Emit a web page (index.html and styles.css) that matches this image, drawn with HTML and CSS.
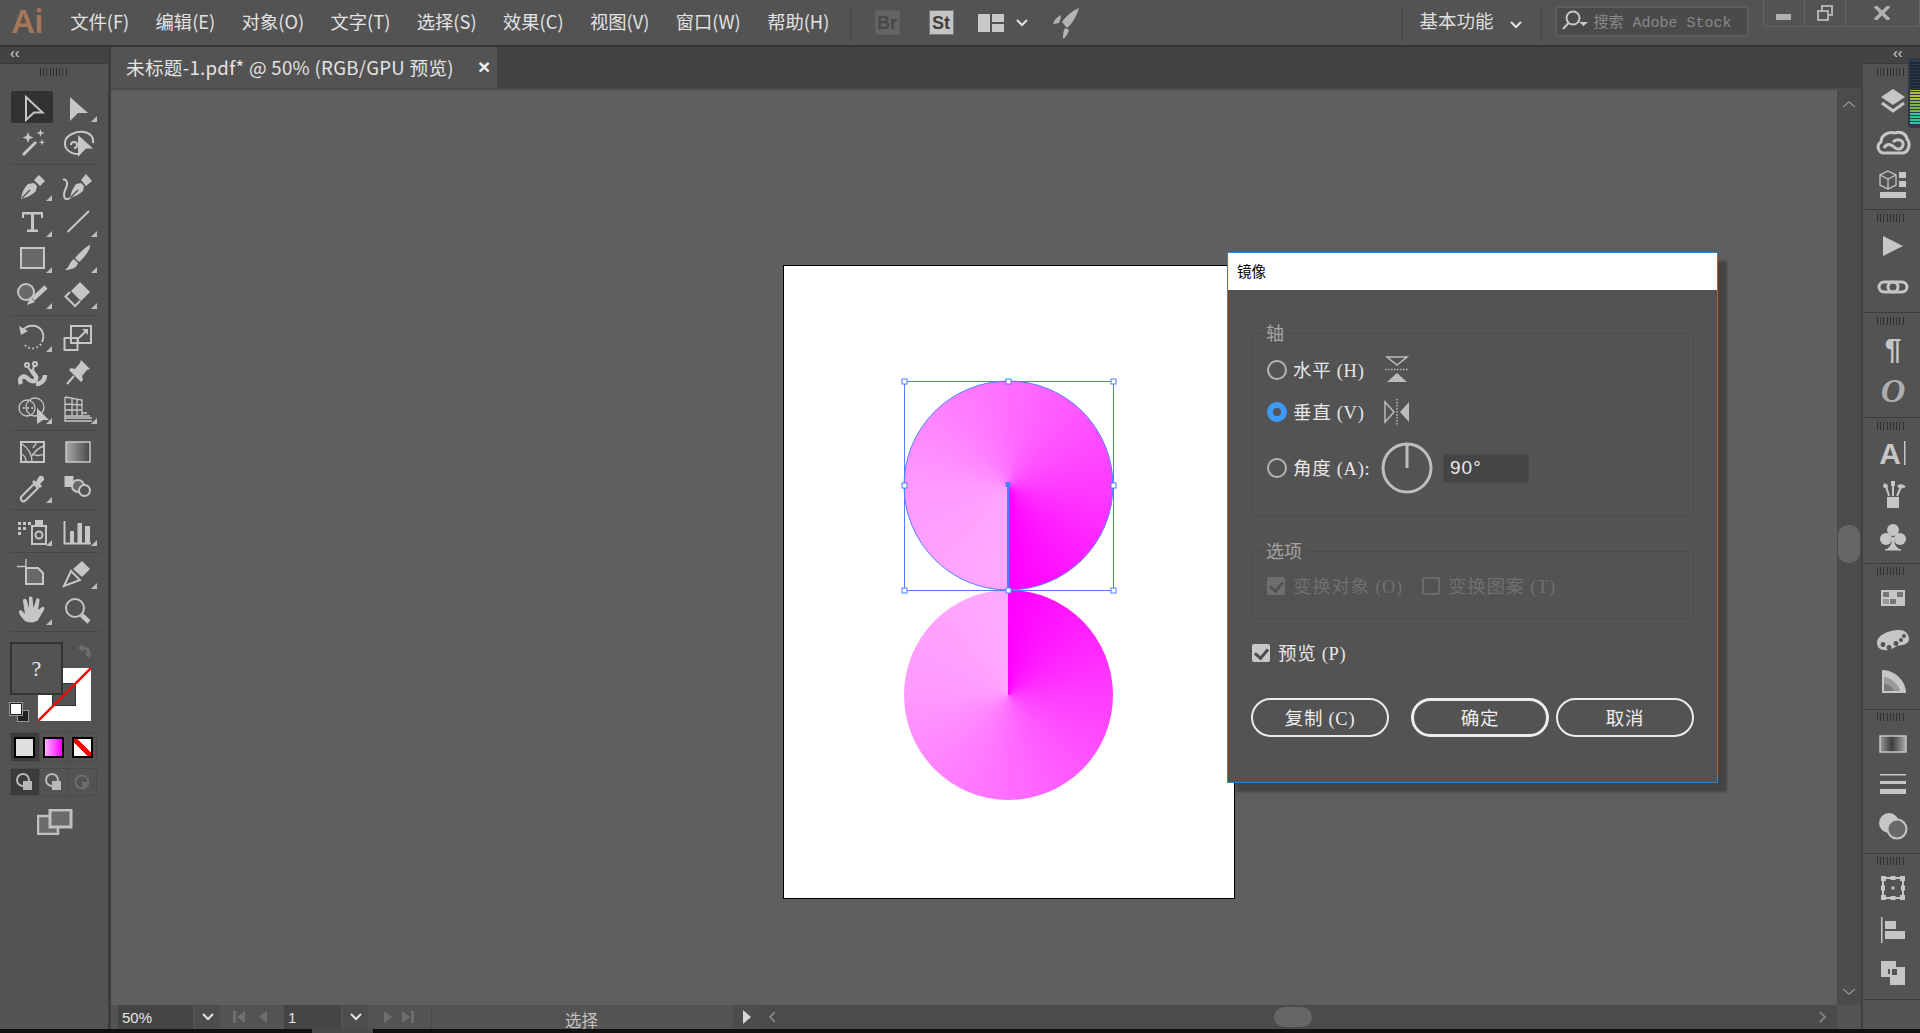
FILE: index.html
```html
<!DOCTYPE html>
<html lang="zh-CN">
<head>
    <meta charset="UTF-8">
    <title>未标题-1.pdf* @ 50% (RGB/GPU 预览)</title>
    <link rel="stylesheet" href="styles.css">
</head>
<body>

<!-- Menu bar -->
<header class="menubar">
    <span class="logo">Ai</span>
    <nav class="menu">
        <span>文件(F)</span><span>编辑(E)</span><span>对象(O)</span><span>文字(T)</span><span>选择(S)</span><span>效果(C)</span><span>视图(V)</span><span>窗口(W)</span><span>帮助(H)</span>
    </nav>
    <i class="bar-sep first-sep"></i>
    <span class="badge badge-br">Br</span>
    <span class="badge badge-st">St</span>
    <svg class="layout-icon" width="26" height="18" viewBox="0 0 26 18"><rect width="12" height="18"/><rect x="14" width="12" height="8"/><rect x="14" y="10" width="12" height="8"/></svg>
    <svg class="chev layout-chev" width="12" height="8" viewBox="0 0 12 8"><path d="M1 1l5 5 5-5"/></svg>
    <svg class="rocket" width="28" height="32" viewBox="0 0 28 32"><path d="M27 1C25 8 21 16 15 21L10 15C14 9 20 4 27 1Z"/><path d="M9 8C5 10 2 13 1 17L7 16C8 13 9 10 9 8Z"/><path d="M17 23C16 27 14 30 11 32C11 28 11 24 13 21Z"/></svg>
    <i class="bar-sep workspace-sep"></i>
    <span class="workspace-name">基本功能</span>
    <svg class="chev workspace-chev" width="12" height="8" viewBox="0 0 12 8"><path d="M1 1l5 5 5-5"/></svg>
    <i class="bar-sep search-sep"></i>
    <div class="stock-search">
        <svg width="26" height="26" viewBox="0 0 26 26"><circle cx="11" cy="10" r="6.500"/><path d="M6.500 15L1 21"/><path class="tip" d="M17 14h9l-4.500 4z"/></svg>
        <span>搜索 Adobe Stock</span>
    </div>
    <div class="win-controls">
        <span class="win-btn"><i class="win-min"></i></span>
        <span class="win-btn"><svg width="18" height="18" viewBox="0 0 18 18"><path d="M5 1h12v11h-4v5H1V6h4zM7 3v3h6v4h2V3zM3 8v7h8V8z" fill-rule="evenodd"/></svg></span>
        <span class="win-btn win-close"><svg width="16" height="14" viewBox="0 0 16 14"><path d="M1 0l7 7 7-7M1 14l7-7 7 7"/></svg></span>
    </div>
</header>

<div class="workspace">

    <!-- Tools panel -->
    <aside class="tools">
        <div class="collapse-bar">‹‹</div>
        <div class="grip"></div>

        <div class="tool-grid">
            <span class="tool active"><svg class="ico" viewBox="0 0 36 36"><path class="line" d="M12 8L28.500 23.500H20L12 31Z"/></svg></span>
            <span class="tool more"><svg class="ico" viewBox="0 0 36 36"><path d="M10 8L28 24H18L10 32Z"/></svg></span>
            <span class="tool"><svg class="ico" viewBox="0 0 36 36"><path class="line thick" d="M9 30L22 17"/><path d="M14 7l1.500 4 4 1.500-4 1.500-1.500 4-1.500-4-4-1.500 4-1.500zM26.500 4l1 3 3 1-3 1-1 3-1-3-3-1 3-1zM28 14l.8 2.500 2.500.8-2.500.8-.8 2.500-.8-2.500-2.500-.8 2.500-.8z"/></svg></span>
            <span class="tool"><svg class="ico" viewBox="0 0 36 36"><path class="line" d="M18 29C10 29 4 24 5 17C6 10 16 6 24 7C31 8 34 13 33 18"/><path class="line" d="M11 20a3 3 0 1 1 3 3"/><path d="M18 10L33 23.500H26L18 32Z"/></svg></span>
        </div>
        <div class="tool-sep"></div>
        <div class="tool-grid">
            <span class="tool more"><svg class="ico" viewBox="0 0 36 36"><path d="M7 31C8 24 10 20 14 16L20 15L23 18L22 23C18 27 14 29 7 31Z"/><path class="cut" d="M8 30L16 22"/><path d="M20 12L25 7L31 13L26 18Z"/></svg></span>
            <span class="tool"><svg class="ico" viewBox="0 0 36 36"><path d="M10 30C11 24 13 20 16 16L21 15L24 18L23 23C20 26 16 28 10 30Z"/><path class="cut" d="M11 29L18 22"/><path d="M21 12L26 6L32 13L26 18Z"/><path class="line" d="M10 30C3 34 3 26 6 20C9 14 5 10 3 12"/></svg></span>
            <span class="tool more"><svg class="ico" viewBox="0 0 36 36"><path d="M8 8H29V14H27V10.500H20V25.500H24V28H13V25.500H17V10.500H10V14H8Z"/></svg></span>
            <span class="tool more"><svg class="ico" viewBox="0 0 36 36"><path class="line" d="M7.500 28L29 7"/></svg></span>
            <span class="tool more"><svg class="ico" viewBox="0 0 36 36"><rect class="line filled" x="7" y="8" width="23" height="20"/></svg></span>
            <span class="tool more"><svg class="ico" viewBox="0 0 36 36"><path d="M30 5C31 9 24 18 19 22L15 18C20 12 27 6 30 5Z"/><path d="M14 19L18 23C17 28 11 30 5 30C9 28 10 21 14 19Z"/></svg></span>
            <span class="tool more"><svg class="ico" viewBox="0 0 36 36"><circle class="line filled" cx="12" cy="16" r="8"/><path class="line wide" d="M32 11L19 23"/><path d="M16 21L21 26L13 29Z"/></svg></span>
            <span class="tool more"><svg class="ico" viewBox="0 0 36 36"><path d="M20 6L30 16L21 25L11 15Z"/><path class="line" d="M10 16L5.500 20.500L15 30L20 25"/></svg></span>
        </div>
        <div class="tool-sep"></div>
        <div class="tool-grid">
            <span class="tool more"><svg class="ico" viewBox="0 0 36 36"><path class="line" d="M8 12C13 5 24 5 28 12C30 16 30 19 28 23"/><path class="line dots" d="M27 25C22 31 14 31 9 24"/><path d="M5 7L7 16L14 12Z"/></svg></span>
            <span class="tool"><svg class="ico" viewBox="0 0 36 36"><rect class="line" x="4.500" y="19" width="13" height="12"/><rect class="line" x="11" y="7" width="20" height="17"/><rect class="line" x="11" y="19" width="7" height="5"/><path class="line" d="M19 19L27 11"/><path d="M22 10H28V16Z"/></svg></span>
            <span class="tool"><svg class="ico" viewBox="0 0 36 36"><path class="line wide" d="M7 29C4 22 10 20 13 23C16 26 20 28 22 24C24 20 17 19 19 15"/><path class="line wide" d="M22 29C26 29 31 26 31 20"/><circle class="line" cx="13" cy="10" r="2"/><circle class="line" cx="21" cy="9" r="2"/><path class="line" d="M14 12L18 18M20 11L18 18"/></svg></span>
            <span class="tool"><svg class="ico" viewBox="0 0 36 36"><path d="M21 5L30 14L27 15L22 21L23 25L21 27L9 15L11 13L15 14L20 8Z"/><path class="line" d="M14 21L7 29"/></svg></span>
            <span class="tool more"><svg class="ico" viewBox="0 0 36 36"><circle class="line thin" cx="13" cy="17" r="8"/><circle class="line thin" cx="21" cy="16" r="9"/><path class="line dots" d="M9 17H19"/><path d="M23 17L35 29H29L23 33Z"/></svg></span>
            <span class="tool more"><svg class="ico" viewBox="0 0 36 36"><path class="line thin" d="M5 6V30H32M5 6L22 9V25H5M12 7V25M17 8V25M5 13L22 14M5 19L22 19"/><path class="line thin" d="M22 22H27M22 25H30M5 27H32"/></svg></span>
        </div>
        <div class="tool-sep"></div>
        <div class="tool-grid">
            <span class="tool"><svg class="ico" viewBox="0 0 36 36"><rect class="line" x="7" y="8" width="23" height="20"/><path class="line thin" d="M18 28C18 20 14 14 8 10M18 22C22 16 26 13 30 12M12 28C12 24 10 21 7 20M18 20C22 22 26 22 30 20M19 14C20 12 22 10 23 8"/></svg></span>
            <span class="tool"><svg class="ico" viewBox="0 0 36 36"><defs><linearGradient id="gradIcon"><stop offset="0" stop-color="#a8a8a8"/><stop offset="1" stop-color="#484848"/></linearGradient></defs><rect class="grad-box" x="6" y="8" width="24" height="20"/></svg></span>
            <span class="tool more"><svg class="ico" viewBox="0 0 36 36"><path class="line" d="M8 31C6 29 7 27 8 26L20 14L24 18L12 30C11 31 9 32 8 31Z"/><path d="M18 12L20 10L22 12L24 8C26 4 31 6 30 10L26 14L28 16L26 18Z"/></svg></span>
            <span class="tool"><svg class="ico" viewBox="0 0 36 36"><rect x="4.500" y="6" width="9" height="11"/><circle class="line filled" cx="18" cy="16" r="6"/><circle class="line hollow" cx="24.500" cy="20.500" r="5.500"/></svg></span>
        </div>
        <div class="tool-sep"></div>
        <div class="tool-grid">
            <span class="tool more"><svg class="ico" viewBox="0 0 36 36"><path d="M4 9h3v3H4zM9 9h3v3H9zM14 9h3v3h-3zM4 14h3v3H4zM9 14h3v3H9zM4 19h3v3H4zM21 7h8v5h-8z"/><rect class="line" x="18" y="13" width="14" height="18"/><circle class="line" cx="25" cy="22" r="3.500"/></svg></span>
            <span class="tool more"><svg class="ico" viewBox="0 0 36 36"><path class="line" d="M4.500 8V30.500H31"/><path d="M10 18h4v12h-4zM17.500 10h4.500v20h-4.500zM25 13h5v17h-5z"/></svg></span>
        </div>
        <div class="tool-sep"></div>
        <div class="tool-grid">
            <span class="tool"><svg class="ico" viewBox="0 0 36 36"><path class="line thin" d="M12 3V12M3 10.500H12"/><path class="line filled" d="M12 12H24L29 17V28H12Z"/></svg></span>
            <span class="tool more"><svg class="ico" viewBox="0 0 36 36"><path class="line" d="M4 30L11 15L20 24Z"/><path d="M13 13L22 5L30 13L22 21Z"/></svg></span>
            <span class="tool more"><svg class="ico" viewBox="0 0 36 36"><path d="M11 29C8 26 4 21 5 19C7 17 9 20 11 22L9 9C9 6 12 6 13 9L15 16L15 6C15 4 18 4 18.500 6L19.500 16L22 8C23 5 26 6 25.500 9L24 18L28 15C30 14 31 16 30 18L24 28C22 31 14 31 11 29Z"/></svg></span>
            <span class="tool"><svg class="ico" viewBox="0 0 36 36"><circle class="line" cx="15" cy="16" r="9"/><path class="line wide" d="M21.500 23L29 30"/></svg></span>
        </div>
        <div class="tool-sep"></div>

        <div class="swatch-stack">
            <div class="stroke-box"><i class="stroke-hole"></i><svg viewBox="0 0 53 53" width="53" height="53"><path d="M0 53L53 0"/></svg></div>
            <div class="fill-box">?</div>
            <svg class="swap" width="16" height="16" viewBox="0 0 16 16"><path d="M1 5L6 1V3.500C11 3.500 13 6 13 10H15L11.500 15L8 10H10C10 7.500 9 6.500 6 6.500V9Z"/></svg>
            <div class="default-colors"><i class="dc-back"></i><i class="dc-front"></i></div>
        </div>

        <div class="mode-row color-modes">
            <span class="mode active"><i class="mc mc-solid"></i></span>
            <span class="mode"><i class="mc mc-grad"></i></span>
            <span class="mode"><i class="mc mc-none"></i></span>
        </div>
        <div class="mode-row draw-modes">
            <span class="mode active"><svg width="20" height="20" viewBox="0 0 20 20"><circle class="ring" cx="8" cy="8" r="6"/><rect x="8" y="9" width="9" height="9"/></svg></span>
            <span class="mode"><svg width="20" height="20" viewBox="0 0 20 20"><rect x="8" y="9" width="9" height="9"/><circle class="ring" cx="8" cy="8" r="6"/></svg></span>
            <span class="mode dim"><svg width="20" height="20" viewBox="0 0 20 20"><circle class="ring" cx="10" cy="10" r="6.500"/><path d="M10 10h6a6 6 0 0 1-6 6z"/></svg></span>
        </div>

        <svg class="screen-mode" width="36" height="26" viewBox="0 0 36 26">
            <rect class="sm-back" x="1" y="7" width="20" height="18"/>
            <rect class="sm-front" x="13" y="1" width="21" height="17"/>
        </svg>
    </aside>

    <!-- Document -->
    <main class="doc">
        <div class="tabstrip">
            <div class="tab"><span>未标题-1.pdf* @ 50% (RGB/GPU 预览)</span><b>×</b></div>
        </div>
        <div class="doc-main">
            <div class="canvas-col">
                <div class="canvas">
                    <div class="artboard">
                        <div class="pie pie-top"></div>
                        <div class="pie pie-bottom"></div>
                        <svg class="selection" width="450" height="632" viewBox="784 266 450 632">
                            <circle cx="1008.500" cy="485.500" r="104.500"/>
                            <rect x="904.500" y="381.500" width="209" height="209"/>
                            <path class="spoke" d="M1008 486V590"/>
                            <rect class="center-pt" x="1005.500" y="482" width="5" height="5"/>
                            <rect class="h" x="902" y="379" width="5" height="5"/><rect class="h" x="1006" y="379" width="5" height="5"/><rect class="h" x="1111" y="379" width="5" height="5"/>
                            <rect class="h" x="902" y="483" width="5" height="5"/><rect class="h" x="1111" y="483" width="5" height="5"/>
                            <rect class="h" x="902" y="588" width="5" height="5"/><rect class="h" x="1006" y="588" width="5" height="5"/><rect class="h" x="1111" y="588" width="5" height="5"/>
                        </svg>
                    </div>
                </div>
                <div class="statusbar">
                    <span class="field zoom-field">50%</span>
                    <span class="st-cell chev-cell"><svg class="chev" width="12" height="8" viewBox="0 0 12 8"><path d="M1 1l5 5 5-5"/></svg></span>
                    <span class="st-cell nav-cell nav-first"><svg width="50" height="16" viewBox="0 0 50 16"><path d="M2 2h3v12H2zM14 2v12L6 8zM36 2v12l-8-6z"/></svg></span>
                    <span class="field page-field">1</span>
                    <span class="st-cell chev-cell"><svg class="chev" width="12" height="8" viewBox="0 0 12 8"><path d="M1 1l5 5 5-5"/></svg></span>
                    <span class="st-cell nav-cell nav-last"><svg width="50" height="16" viewBox="0 0 50 16"><path d="M12 2v12l8-6zM30 2v12l8-6zM39 2h3v12h-3z"/></svg></span>
                    <span class="status-label">选择</span>
                    <span class="st-cell arrow-cell"><svg width="10" height="16" viewBox="0 0 10 16"><path d="M1 1v14l8-7z"/></svg></span>
                    <div class="hscroll">
                        <svg class="chev" width="8" height="12" viewBox="0 0 8 12"><path d="M7 1L2 6l5 5"/></svg>
                        <i class="hthumb"></i>
                        <svg class="chev hscroll-right" width="8" height="12" viewBox="0 0 8 12"><path d="M1 1l5 5-5 5"/></svg>
                    </div>
                </div>
            </div>
            <div class="vscroll">
                <div class="vtrack">
                    <svg class="chev" width="14" height="8" viewBox="0 0 14 8"><path d="M1 7l6-5 6 5"/></svg>
                    <i class="vthumb"></i>
                    <svg class="chev vscroll-down" width="14" height="8" viewBox="0 0 14 8"><path d="M1 1l6 5 6-5"/></svg>
                </div>
                <div class="vcorner"></div>
            </div>
        </div>
    </main>

    <!-- Dock on the right -->
    <aside class="dock">
        <div class="collapse-bar dock-collapse">‹‹</div>

        <div class="dock-group">
            <div class="grip"></div>
            <span class="dock-ico"><svg class="ico" viewBox="0 0 36 36"><path d="M18 6L30 14L18 22L6 14Z"/><path class="line thick" d="M7 20L18 28L29 20"/></svg></span>
            <span class="dock-ico"><svg class="ico" viewBox="0 0 36 36"><path class="line thick" d="M9 29C3 29 1 21 6 18C6 11 14 7 20 9C24 7 31 9 32 15C36 19 34 29 27 29Z"/><path class="line thick" d="M9 24C12 18 17 21 19 23C22 26 27 26 28 21C29 16 22 14 18 18"/></svg></span>
            <span class="dock-ico"><svg class="ico" viewBox="0 0 36 36"><path class="line thin" d="M13 6L21 10V20L13 24L5 20V10ZM5 10L13 14L21 10M13 14V24"/><path d="M24 7h7v6h-7zM24 16h7v6h-7zM5 27h26v6H5z"/></svg></span>
        </div>
        <div class="dock-group tight">
            <div class="grip"></div>
            <span class="dock-ico"><svg class="ico" viewBox="0 0 36 36"><path d="M8 7L28 17L8 27Z"/></svg></span>
            <span class="dock-ico"><svg class="ico" viewBox="0 0 36 36"><rect class="line thick" x="4" y="12" width="19" height="10" rx="5"/><rect class="line thick" x="13" y="12" width="19" height="10" rx="5"/></svg></span>
        </div>
        <div class="dock-group">
            <div class="grip"></div>
            <span class="dock-ico"><svg class="ico" viewBox="0 0 36 36"><text class="glyph-pilcrow" x="18" y="27">¶</text></svg></span>
            <span class="dock-ico"><svg class="ico" viewBox="0 0 36 36"><text class="glyph-o" x="18" y="29">O</text></svg></span>
        </div>
        <div class="dock-group">
            <div class="grip"></div>
            <span class="dock-ico"><svg class="ico" viewBox="0 0 36 36"><text class="glyph-a" x="15" y="27">A</text><path d="M29 4h1.500v24H29z"/></svg></span>
            <span class="dock-ico"><svg class="ico" viewBox="0 0 36 36"><path d="M12 19h12v11H12z"/><path class="line" d="M14 18L11 8M18 18V5M22 18L26 9"/><path d="M9 5l4 2-1 4-4-2zM16 3h4v5h-4zM22 8C24 5 29 6 31 9L25 11Z"/></svg></span>
            <span class="dock-ico"><svg class="ico" viewBox="0 0 36 36"><circle cx="18" cy="11" r="6"/><circle cx="11" cy="20" r="6"/><circle cx="25" cy="20" r="6"/><path d="M17 18h2C19 24 20 27 24 30H12C16 27 17 24 17 18Z"/><path d="M10 30h16v1.500H10z"/></svg></span>
        </div>
        <div class="dock-group short">
            <div class="grip"></div>
            <span class="dock-ico"><svg class="ico" viewBox="0 0 36 36"><rect class="sw" x="6" y="10" width="24" height="16"/><path class="sw-d" d="M8 12h6v5H8zM22 12h6v5h-6zM15 19h6v5h-6z"/><path class="sw-m" d="M8 19h6v5H8z"/></svg></span>
            <span class="dock-ico"><svg class="ico" viewBox="0 0 36 36"><path d="M2 22C2 14 14 9 24 9C31 9 34 14 34 18C34 24 26 24 22 25C18 27 14 30 9 29C5 29 2 26 2 22Z"/><path class="holes" d="M8 21a2.500 2.500 0 1 0 .01 0zM14 24a2.500 2.500 0 1 0 .01 0zM21 20a2.500 2.500 0 1 0 .01 0zM26 17a2 2 0 1 0 .01 0zM29 13a2 2 0 1 0 .01 0z"/></svg></span>
            <span class="dock-ico"><svg class="ico" viewBox="0 0 36 36"><path d="M7 8C20 8 31 19 31 31H7Z"/><path class="sw-m" d="M9 15C17 16 24 23 25 29H9Z"/><path class="sw-d" d="M9 22C14 22 18 26 19 29H9Z"/></svg></span>
        </div>
        <div class="dock-group tight short">
            <div class="grip"></div>
            <span class="dock-ico"><svg class="ico" viewBox="0 0 36 36"><defs><linearGradient id="gradDock"><stop offset="0" stop-color="#999"/><stop offset=".45" stop-color="#3d3d3d"/><stop offset="1" stop-color="#aaa"/></linearGradient></defs><rect class="grad-dock" x="5" y="10" width="26" height="16"/></svg></span>
            <span class="dock-ico"><svg class="ico" viewBox="0 0 36 36"><path d="M5 7h26v1.500H5zM5 14h26v3H5zM5 22h26v5H5z"/></svg></span>
            <span class="dock-ico"><svg class="ico" viewBox="0 0 36 36"><circle cx="14" cy="15" r="10"/><circle class="line filled" cx="22" cy="21" r="9.500"/></svg></span>
        </div>
        <div class="dock-group short">
            <div class="grip"></div>
            <span class="dock-ico"><svg class="ico" viewBox="0 0 36 36"><rect class="line" x="8" y="8" width="20" height="20"/><path d="M6 6h5v5H6zM15.500 6h5v4h-5zM25 6h5v5h-5zM6 15.500h4v5H6zM26 15.500h4v5h-4zM6 25h5v5H6zM15.500 26h5v4h-5zM25 25h5v5h-5zM16.500 16.500h3v3h-3z"/></svg></span>
            <span class="dock-ico"><svg class="ico" viewBox="0 0 36 36"><path d="M6 6h1.500v26H6zM10 10h11v8H10zM10 20h20v8H10z"/></svg></span>
            <span class="dock-ico"><svg class="ico" viewBox="0 0 36 36"><path d="M6 9h15v6h9v18H15v-8H6zM13 17v5h2v-5zM17 17v6h5v-6z" fill-rule="evenodd"/></svg></span>
        </div>
        <div class="dock-rest"></div>

        <!-- floating meter -->
        <div class="meter"><i></i></div>
    </aside>
</div>

<div class="taskstrip"><i></i></div>

<!-- Reflect dialog -->
<section class="dialog">
    <div class="dialog-title">镜像</div>
    <div class="dialog-body">
        <fieldset class="axis-set">
            <legend>轴</legend>
            <div class="opt-row">
                <i class="radio"></i><span class="opt-label axis-label">水平 (H)</span>
                <svg class="axis-ico" width="26" height="28" viewBox="0 0 26 28"><path class="outl" d="M3 1H23L13 9Z"/><path class="dash" d="M1 13.500H25"/><path d="M3 26H23L13 17Z"/></svg>
            </div>
            <div class="opt-row">
                <i class="radio checked"></i><span class="opt-label axis-label">垂直 (V)</span>
                <svg class="axis-ico" width="26" height="28" viewBox="0 0 26 28"><path class="outl" d="M1 4V24L10 14Z"/><path class="dash" d="M13 1V27"/><path d="M25 4V24L16 14Z"/></svg>
            </div>
            <div class="opt-row angle-row">
                <i class="radio"></i><span class="opt-label angle-label">角度 (A):</span>
                <svg class="dial" width="52" height="52" viewBox="0 0 52 52"><circle cx="26" cy="26" r="24"/><path d="M26 2V26"/></svg>
                <span class="angle-input">90°</span>
            </div>
        </fieldset>

        <fieldset class="opts-set">
            <legend>选项</legend>
            <div class="opt-row check-row">
                <i class="check on dim"></i><span class="opt-label dim-text first-opt">变换对象 (O)</span>
                <i class="check dim"></i><span class="opt-label dim-text">变换图案 (T)</span>
            </div>
        </fieldset>

        <div class="preview-row">
            <i class="check on"></i><span class="opt-label">预览 (P)</span>
        </div>

        <div class="btn-row">
            <button type="button" class="btn">复制 (C)</button>
            <button type="button" class="btn primary">确定</button>
            <button type="button" class="btn">取消</button>
        </div>
    </div>
</section>

</body>
</html>
```

FILE: styles.css
```css
* {
    box-sizing: border-box;
}
html, body {
    margin: 0;
    padding: 0;
}
body {
    position: relative;
    width: 1920px;
    height: 1033px;
    overflow: hidden;
    display: flex;
    flex-direction: column;
    background: #535353;
    color: #e0e0e0;
    font-family: "Noto Sans CJK SC", sans-serif;
}

/* shared icon styles */
.ico {
    width: 36px;
    height: 36px;
    fill: #c6c6c6;
    flex: none;
}
.ico .line {
    fill: none;
    stroke: #c6c6c6;
    stroke-width: 2;
}
.ico .line.thin { stroke-width: 1.3; }
.ico .line.thick { stroke-width: 3; }
.ico .line.wide { stroke-width: 4.5; }
.ico .line.filled { fill: #696969; }
.ico .line.hollow { fill: #535353; }
.ico .line.dots { stroke-dasharray: 1.6 2.6; }
.ico .cut {
    fill: none;
    stroke: #535353;
    stroke-width: 1.5;
}
.ico .grad-box {
    fill: url(#gradIcon);
    stroke: #c6c6c6;
    stroke-width: 1.5;
}
.ico .grad-dock {
    fill: url(#gradDock);
    stroke: #c6c6c6;
    stroke-width: 1.5;
}
.ico .sw-d { fill: #777; }
.ico .sw-m { fill: #999; }
.ico .holes { fill: #535353; }
.chev {
    fill: none;
    stroke: #e4e4e4;
    stroke-width: 2;
    flex: none;
}

.grip {
    height: 16px;
    background: repeating-linear-gradient(90deg, #2f2f2f 0 1px, transparent 1px 3.2px) center / 29px 8px no-repeat;
}

/* Menu bar */
.menubar {
    height: 47px;
    flex: none;
    display: flex;
    align-items: center;
    background: #535353;
    border-bottom: 2px solid #333;
}
.logo {
    width: 57px;
    padding-left: 12px;
    font: 600 33px/41px "Noto Sans", sans-serif;
    color: #a5775a;
    align-self: flex-start;
}
.menu {
    display: flex;
    padding-bottom: 4px;
    font-size: 18.300px;
    color: #e2e2e2;
    white-space: nowrap;
}
.menu span {
    padding: 0 13.200px;
}
.bar-sep {
    width: 2px;
    height: 36px;
    background: #4b4b4b;
}
.first-sep { margin-left: 7px; }
.badge {
    width: 25px;
    height: 25px;
    margin-left: 23px;
    font: bold 18px/24px "Liberation Sans", sans-serif;
    text-align: center;
    border: 1px solid #7a7a7a;
}
.badge-br {
    background: #646464;
    color: #484848;
    border-color: #5e5e5e;
}
.badge-st {
    margin-left: 29px;
    background: #c4c4c4;
    color: #3f3f3f;
}
.layout-icon {
    margin-left: 24px;
    fill: #c8c8c8;
}
.layout-chev { margin-left: 12px; }
.rocket {
    margin-left: 24px;
    fill: #b4b4b4;
}
.workspace-sep { margin-left: 321px; }
.workspace-name {
    margin-left: 17px;
    padding-bottom: 6px;
    font-size: 18.500px;
    color: #dedede;
}
.workspace-chev { margin: 5px 0 0 16px; }
.search-sep { margin-left: 18px; }
.stock-search {
    width: 194px;
    height: 31px;
    margin: 0 0 3px 13px;
    padding: 0 0 1px 5px;
    display: flex;
    align-items: center;
    gap: 6px;
    background: #4a4a4a;
    border: 2px solid #5c5c5c;
    border-radius: 4px;
    font: 15px "Liberation Mono", "Noto Sans CJK SC", monospace;
    color: #888;
    white-space: nowrap;
}
.stock-search svg {
    fill: none;
    stroke: #c8c8c8;
    stroke-width: 2;
    flex: none;
}
.stock-search .tip {
    fill: #c8c8c8;
    stroke: none;
}
.win-controls {
    display: flex;
    height: 27px;
    margin: 0 0 18px 14px;
    border: 1px solid #636363;
    border-top: 0;
    border-radius: 0 0 0 4px;
    flex: 1;
}
.win-btn {
    width: 41px;
    display: flex;
    align-items: center;
    justify-content: center;
    border-right: 1px solid #636363;
}
.win-btn svg {
    fill: #b0b0b0;
    stroke: none;
}
.win-min {
    width: 15px;
    height: 6px;
    margin-top: 7px;
    background: #b0b0b0;
}
.win-close {
    border: 0;
    flex: 1;
}
.win-close svg {
    fill: none;
    stroke: #b0b0b0;
    stroke-width: 3.500;
}

.workspace {
    flex: 1;
    display: flex;
    min-height: 0;
}
.collapse-bar {
    height: 17px;
    padding-left: 10px;
    background: #434343;
    border-bottom: 1px solid #3a3a3a;
    font: 14px/13px "Liberation Sans", sans-serif;
    color: #ddd;
}

/* Tools panel */
.tools {
    width: 111px;
    flex: none;
    background: #535353;
    border-right: 3px solid #3d3d3d;
}
.tools > .grip {
    margin-bottom: 9px;
}
.tool-grid {
    display: grid;
    grid-template-columns: 44px 48px;
    grid-auto-rows: 36px;
    padding-left: 10px;
}
.tool {
    position: relative;
    display: flex;
    align-items: center;
    justify-content: center;
}
.tool.active {
    margin: 2px 1px 2px 1px;
    background: #323232;
    border-radius: 3px;
}
.tool.more::after {
    content: "";
    position: absolute;
    right: 2px;
    bottom: 3px;
    width: 6px;
    height: 6px;
    background: #bdbdbd;
    clip-path: polygon(100% 0, 100% 100%, 0 100%);
}
.tool.more:nth-child(even)::after {
    right: 5px;
}
.tool-sep {
    height: 1px;
    margin: 3px 8px 3px 9px;
    background: #484848;
}

.swatch-stack {
    position: relative;
    height: 97px;
}
.fill-box {
    position: absolute;
    left: 10px;
    top: 7px;
    width: 53px;
    height: 53px;
    background: #535353;
    border: 2px solid #333;
    font: 22px/50px "Liberation Serif", serif;
    text-align: center;
    color: #dfe6ee;
}
.stroke-box {
    position: absolute;
    left: 38px;
    top: 33px;
    width: 53px;
    height: 53px;
    background: #fff;
}
.stroke-box svg {
    position: absolute;
    left: 0;
    top: 0;
    fill: none;
    stroke: #f00;
    stroke-width: 2.500;
}
.stroke-hole {
    position: absolute;
    left: 14px;
    top: 15px;
    width: 24px;
    height: 23px;
    background: #535353;
    border: 1px solid #333;
}
.swap {
    position: absolute;
    left: 77px;
    top: 8px;
    fill: #6e6e6e;
}
.default-colors {
    position: absolute;
    left: 10px;
    top: 68px;
    width: 19px;
    height: 19px;
}
.dc-back, .dc-front {
    position: absolute;
    width: 12px;
    height: 12px;
}
.dc-back {
    right: 0;
    bottom: 0;
    background: #222;
    border: 1px solid #999;
}
.dc-front {
    left: 0;
    top: 0;
    background: #fff;
    border: 1px solid #222;
    outline: 1px solid #999;
}
.mode-row {
    display: flex;
    width: 87px;
    height: 30px;
    margin-left: 10px;
    border: 1px solid #4a4a4a;
    border-radius: 3px;
}
.draw-modes {
    height: 28px;
    margin-top: 6px;
}
.mode {
    flex: 1;
    display: flex;
    align-items: center;
    justify-content: center;
    border-right: 1px solid #4a4a4a;
}
.mode:last-child { border-right: 0; }
.mode.active { background: #3b3b3b; }
.mode svg { fill: #b8b8b8; }
.mode .ring {
    fill: none;
    stroke: #b8b8b8;
    stroke-width: 2;
}
.mode.dim svg { fill: #6d6d6d; }
.mode.dim .ring { stroke: #6d6d6d; }
.mc {
    width: 21px;
    height: 21px;
    border: 2px solid #000;
}
.mc-solid { background: #dfdfdf; }
.mc-grad { background: linear-gradient(90deg, #ffb0ff, #f0f); }
.mc-none { background: linear-gradient(135deg, #fff 0 40%, #f00 40% 60%, #fff 60%); transform: scaleX(-1); }
.screen-mode {
    display: block;
    margin: 13px 0 0 37px;
}
.sm-back, .sm-front {
    fill: #6b6b6b;
    stroke: #c0c0c0;
    stroke-width: 2.500;
}
.sm-front { stroke-width: 3; }

/* Document */
.doc {
    flex: 1;
    min-width: 0;
    display: flex;
    flex-direction: column;
    border-right: 2px solid #404040;
}
.tabstrip {
    height: 43px;
    flex: none;
    background: #424242;
    border-bottom: 2px solid #4b4b4b;
}
.tab {
    width: 386px;
    height: 41px;
    padding: 0 0 2px 15px;
    display: flex;
    align-items: center;
    background: #535353;
    font-size: 18.600px;
    letter-spacing: .3px;
    color: #e4e4e4;
    white-space: nowrap;
}
.tab b {
    margin-left: 24px;
    font: bold 21px "Liberation Sans", sans-serif;
    color: #eee;
}
.doc-main {
    flex: 1;
    display: flex;
    min-height: 0;
}
.canvas-col {
    flex: 1;
    min-width: 0;
    display: flex;
    flex-direction: column;
}
.canvas {
    position: relative;
    flex: 1;
    background: #5f5f5f;
}
.artboard {
    position: absolute;
    left: 672px;
    top: 175px;
    width: 452px;
    height: 634px;
    background: #fff;
    border: 1px solid #000;
}
.pie {
    position: absolute;
    left: 120px;
    width: 209px;
    height: 209px;
    border-radius: 50%;
}
.pie-top {
    top: 115px;
    background: conic-gradient(from 180deg, #ffaaff, #ff99ff 25%, #ff6eff 50%, #ff3cff 75%, #ff00ff);
}
.pie-bottom {
    top: 324px;
    height: 210px;
    background: conic-gradient(#ff00ff, #ff3cff 25%, #ff6eff 50%, #ff99ff 75%, #ffaaff);
}
.selection {
    position: absolute;
    left: 0;
    top: 0;
    fill: none;
    stroke: #4f7fff;
    stroke-width: 1;
}
.selection .h {
    fill: #fff;
    stroke-width: 1;
}
.selection .spoke { stroke-width: 2; }
.selection .center-pt {
    fill: #4f7fff;
    stroke: none;
}

.statusbar {
    height: 24px;
    flex: none;
    display: flex;
    align-items: stretch;
    padding-left: 7px;
    background: #535353;
    font-size: 15px;
}
.field {
    display: flex;
    align-items: center;
    background: #444;
    color: #e4e4e4;
    font: 15px "Liberation Sans", sans-serif;
    padding-left: 4px;
}
.zoom-field { width: 75px; }
.page-field { width: 57px; margin-left: 1px; }
.st-cell {
    display: flex;
    align-items: center;
    justify-content: center;
    margin-left: 2px;
}
.chev-cell { width: 25px; background: #4d4d4d; }
.nav-cell {
    width: 60px;
    margin-right: 1px;
}
.nav-first { padding-left: 8px; }
.nav-last { padding-right: 6px; }
.nav-cell svg { fill: #6e6e6e; flex: none; }
.status-label {
    flex: none;
    width: 302px;
    padding: 6px 0 0 133px;
    font-size: 16.500px;
    line-height: 18px;
    color: #c4c4c4;
    border-left: 1px solid #4b4b4b;
}
.arrow-cell {
    width: 27px;
    margin: 0;
    background: #4d4d4d;
}
.arrow-cell svg { fill: #d6d6d6; }
.hscroll {
    flex: 1;
    display: flex;
    align-items: center;
    padding-left: 8px;
    background: #4b4b4b;
}
.hscroll .chev, .vtrack .chev {
    stroke: #8f8f8f;
    stroke-width: 1.500;
}
.hthumb {
    width: 38px;
    height: 20px;
    margin-left: 498px;
    background: #666;
    border-radius: 10px;
}
.hscroll-right { margin-left: auto; margin-right: 10px; }
.vscroll {
    width: 24px;
    flex: none;
    display: flex;
    flex-direction: column;
}
.vtrack {
    position: relative;
    flex: 1;
    display: flex;
    flex-direction: column;
    align-items: center;
    padding: 10px 0 9px;
    background: #4b4b4b;
}
.vthumb {
    width: 22px;
    height: 38px;
    margin-top: 417px;
    background: #666;
    border-radius: 10px;
}
.vscroll-down { margin-top: auto; }
.vcorner {
    height: 24px;
    background: #535353;
}

/* Dock */
.dock {
    position: relative;
    width: 57px;
    flex: none;
    display: flex;
    flex-direction: column;
}
.dock-collapse {
    padding-left: 30px;
}
.dock-group {
    display: flex;
    flex-direction: column;
    padding-bottom: 6px;
    border-bottom: 1px solid #3d3d3d;
}
.dock-group.tight {
    padding-bottom: 4px;
}
.dock-group.short .grip {
    height: 14px;
    margin-bottom: -1px;
}
.dock-group.short {
    padding-bottom: 9px;
}
.dock-group.tight.short {
    padding-bottom: 7px;
}
.dock-ico {
    height: 41px;
    padding-left: 3px;
    display: flex;
    align-items: center;
    justify-content: center;
}
.dock-rest {
    flex: 1;
}
.ico .sw { fill: #c6c6c6; }
.ico text { fill: #c6c6c6; text-anchor: middle; }
.glyph-pilcrow { font: bold 30px "Liberation Sans", sans-serif; }
.glyph-o { font: italic bold 34px "Liberation Serif", serif; }
.ico .glyph-o { fill: #adadad; }
.glyph-a { font: bold 30px "Liberation Sans", sans-serif; }
.meter {
    position: absolute;
    right: 0;
    top: 11px;
    width: 12px;
    height: 70px;
    padding: 4px 0 0 2px;
    background: #2f394d;
    border-radius: 4px 0 0 4px;
}
.meter i {
    display: block;
    width: 10px;
    height: 63px;
    background:
        repeating-linear-gradient(180deg, transparent 0 2px, #2f394d 2px 3px),
        linear-gradient(180deg, #1e2738 0 44%, #b6bd3c 44% 60%, #7fb648 60% 82%, #35c0a0 82%);
}

.taskstrip {
    height: 4px;
    flex: none;
    background: #111;
}
.taskstrip i {
    display: block;
    width: 61px;
    height: 4px;
    margin-left: 312px;
    background: #4a4a4a;
}

/* Reflect dialog */
.dialog {
    position: absolute;
    left: 1227px;
    top: 252px;
    width: 491px;
    height: 531px;
    background: #535353;
    border: 1px solid #2f83cf;
    box-shadow: 9px 9px 2px rgba(0, 0, 0, .28);
}
.dialog-title {
    height: 37px;
    padding-left: 9px;
    background: #fff;
    color: #000;
    font-size: 14.500px;
    line-height: 36px;
}
.dialog-body {
    padding: 31px 23px 0;
    font-family: "Liberation Serif", "Noto Sans CJK SC", serif;
}
fieldset {
    margin: 0;
    padding: 0 15px;
    min-width: 0;
    border: 1px solid #4b4b4b;
    border-radius: 3px;
}
legend {
    margin-left: -5px;
    padding: 0 4px;
    height: 24px;
    font-size: 18px;
    line-height: 26px;
    color: #a4a4a4;
}
.axis-set {
    height: 196px;
    padding-top: 10px;
}
.opts-set {
    height: 80px;
    margin-top: 22px;
    padding-top: 14px;
}
.opt-row {
    height: 30px;
    margin-bottom: 12px;
    display: flex;
    align-items: center;
}
.angle-row {
    height: 52px;
    margin-top: 15px;
    margin-bottom: 0;
}
.check-row {
    height: 18px;
    margin: 0;
}
.opt-label {
    margin-left: 6px;
    padding-bottom: 2px;
    font-size: 18.500px;
    letter-spacing: .7px;
    color: #e6e6e6;
    white-space: nowrap;
}
.axis-label { width: 91px; }
.angle-label { width: 88px; }
.check-row .opt-label { margin-left: 8px; }
.first-opt { width: 129px; }
.dim-text { color: #6f6f6f; }
.radio {
    width: 20px;
    height: 20px;
    flex: none;
    border: 2px solid #b4b4b4;
    border-radius: 50%;
}
.radio.checked {
    border: 6px solid #3d9bf5;
    background: #535353;
}
.axis-ico {
    fill: #bcbcbc;
    flex: none;
}
.axis-ico .outl {
    fill: none;
    stroke: #bcbcbc;
    stroke-width: 1.500;
}
.axis-ico .dash {
    fill: none;
    stroke: #bcbcbc;
    stroke-width: 1.500;
    stroke-dasharray: 1.500 1.500;
}
.dial {
    flex: none;
    fill: none;
    stroke: #bdbdbd;
    stroke-width: 3;
}
.angle-input {
    width: 86px;
    height: 29px;
    margin-left: 10px;
    padding-left: 6px;
    background: #444;
    border: 1px solid #4b4b4b;
    border-radius: 3px;
    font: 19px/26px "Liberation Sans", sans-serif;
    letter-spacing: 1px;
    color: #e8e8e8;
}
.check {
    position: relative;
    width: 18px;
    height: 18px;
    flex: none;
    border-radius: 2px;
    border: 2px solid #6a6a6a;
}
.check.on {
    border: 0;
    background: #c8c8c8;
}
.check.on::after {
    content: "";
    position: absolute;
    left: 5px;
    top: 2px;
    width: 6px;
    height: 10px;
    border: solid #4e4e4e;
    border-width: 0 3px 3px 0;
    transform: rotate(40deg);
}
.check.on.dim { background: #6e6e6e; }
.check.on.dim::after { border-color: #535353; }
.preview-row {
    height: 18px;
    margin-top: 25px;
    padding-left: 1px;
    display: flex;
    align-items: center;
}
.preview-row .opt-label { margin-left: 8px; }
.btn-row {
    display: flex;
    margin-top: 36px;
}
.btn {
    width: 138px;
    height: 39px;
    padding: 0 0 2px;
    background: transparent;
    border: 2px solid #ececec;
    border-radius: 20px;
    font: 18.500px "Liberation Serif", "Noto Sans CJK SC", serif;
    letter-spacing: .7px;
    color: #ececec;
}
.btn.primary {
    margin: 0 7px 0 22px;
    border-width: 3px;
}
```
